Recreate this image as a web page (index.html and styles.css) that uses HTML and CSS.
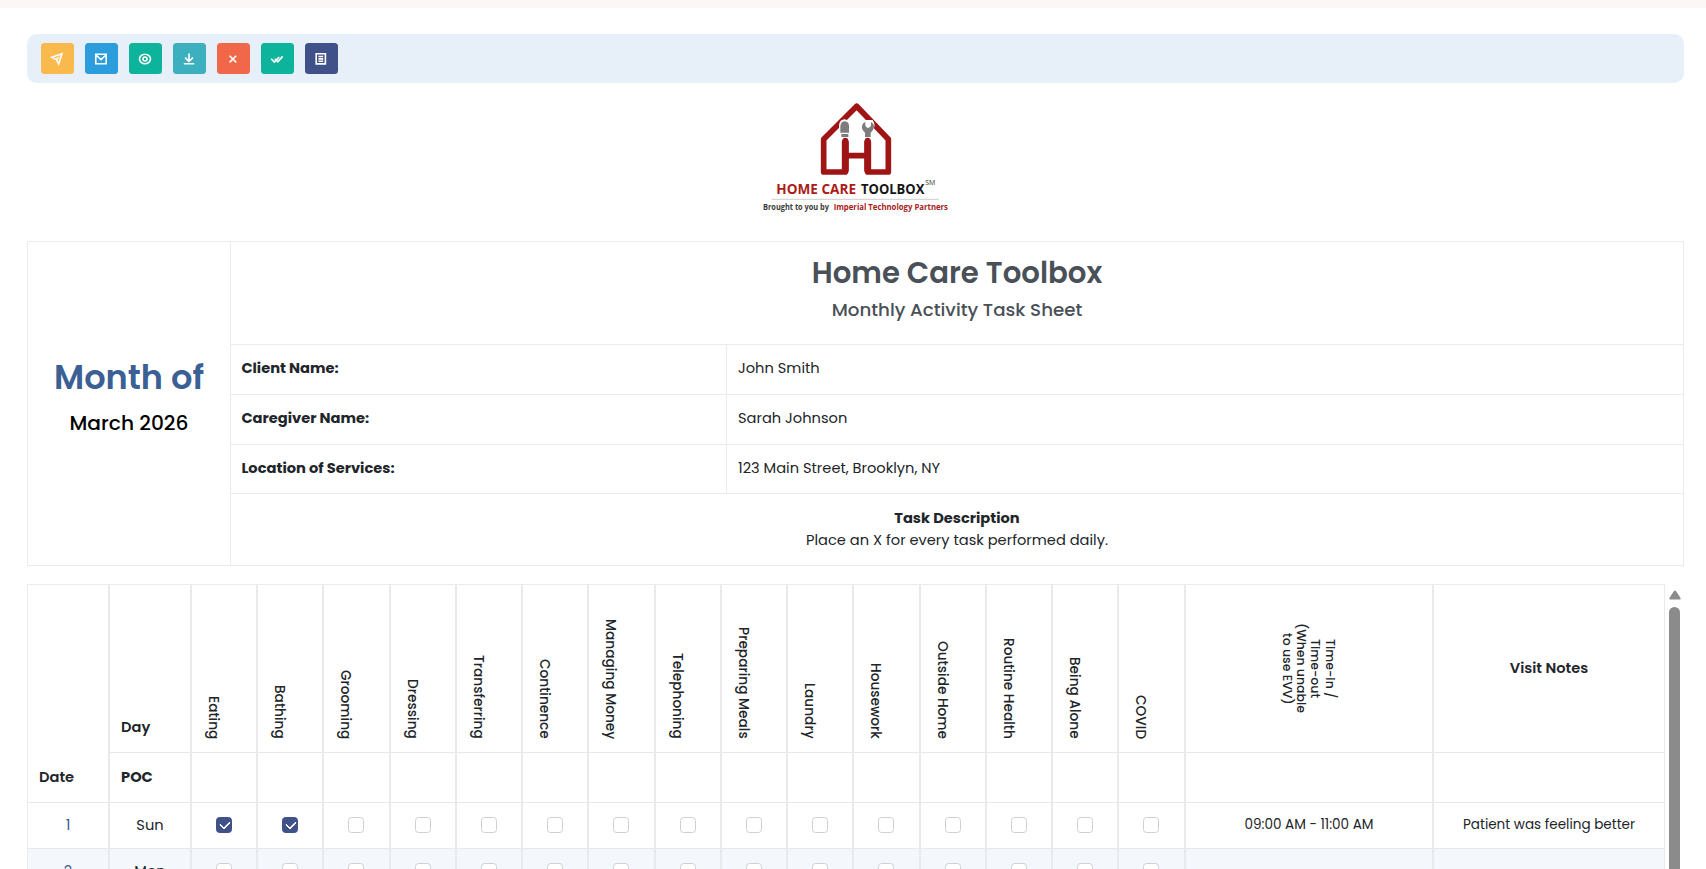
FILE: index.html
```
<!DOCTYPE html>
<html lang="en">
<head>
  <meta charset="UTF-8">
  <meta name="viewport" content="width=device-width, initial-scale=1.0">
  <title>Monthly Activity Task Sheet</title>
  <link rel="stylesheet" href="styles.css">
</head>
<body>
  <div class="top-strip"></div>

  <main class="page">
    <div class="toolbar">
      <button class="btn btn-send" aria-label="Send">
        <svg viewBox="0 0 14 14"><path d="M1.6 5.2 L12 1.8 L8.7 12 L6.4 7.6 Z M6.4 7.6 L9 5"/></svg>
      </button>
      <button class="btn btn-mail" aria-label="Mail">
        <svg viewBox="0 0 14 14"><path d="M1.8 2.3 H12.2 V11.8 H1.8 Z M2 3 L7 7.6 L12 3"/></svg>
      </button>
      <button class="btn btn-green" aria-label="View">
        <svg viewBox="0 0 14 14"><ellipse cx="7" cy="7" rx="5.5" ry="4.8"/><circle cx="7" cy="7" r="2"/></svg>
      </button>
      <button class="btn btn-download" aria-label="Download">
        <svg viewBox="0 0 14 14"><path d="M7 1.4 V9.2 M3 5.6 L7 9.4 L11 5.6 M1.8 11.8 H12.2"/></svg>
      </button>
      <button class="btn btn-close" aria-label="Close">
        <svg viewBox="0 0 14 14"><path d="M3.6 3.8 L10.2 10.4 M10.2 3.8 L3.6 10.4"/></svg>
      </button>
      <button class="btn btn-green" aria-label="Approve">
        <svg viewBox="0 0 14 14"><path d="M1.2 6.8 L4.4 10 L9.2 5 M4.8 6.8 L7.8 9.8 L12.6 4.4"/></svg>
      </button>
      <button class="btn btn-report" aria-label="Report">
        <svg viewBox="0 0 14 14"><path d="M2.2 1.8 H11.4 V11.9 H2.2 Z M4.4 4.5 H9.2 M4.4 6.9 H9.2 M4.4 9.3 H9.2"/></svg>
      </button>
    </div>

    <div class="logo">
      <svg viewBox="0 0 690 420" width="230" height="140">
        <g fill="none" stroke="#9f1414" stroke-width="17" stroke-linejoin="round" stroke-linecap="round">
          <path d="M316 152 V246 H251 V148 L350 49 L445 148 V246 H383 V152"/>
          <path d="M316 157 V240 M383 157 V240" stroke-width="21"/>
          <path d="M316 197 H383"/>
        </g>
        <path d="M297 140 V106 Q299 88 314 88 Q330 90 330 106 V140 Z M365 140 L370 122 Q360 108 368 90 H398 Q410 108 396 122 L400 140 Z" fill="#fff"/>
        <path d="M301 128 V108 Q303 94 314 94 Q327 95 327 108 V128 Z M304 132 H325 V141 H304 Z" fill="#7d7d7d"/>
        <path d="M375 141 V128 Q364 119 366 108 Q367 99 376 96 V108 L384 115 L393 108 V96 Q403 102 402 111 Q400 122 392 128 V141 Z" fill="#7d7d7d"/>
        <g class="logo-name">
          <text x="109" y="312" textLength="239" lengthAdjust="spacingAndGlyphs" fill="#ac1c16">HOME CARE</text>
          <text x="363" y="312" textLength="190" lengthAdjust="spacingAndGlyphs" fill="#161616">TOOLBOX</text>
        </g>
        <text class="logo-mark" x="556" y="286" textLength="30" lengthAdjust="spacingAndGlyphs">SM</text>
        <path d="M95 328 H597" stroke="#b5b5b5" stroke-width="2"/>
        <g class="logo-sub">
          <text x="69" y="359" textLength="198" lengthAdjust="spacingAndGlyphs" fill="#3a3a3a">Brought to you by</text>
          <text x="281" y="359" textLength="343" lengthAdjust="spacingAndGlyphs" fill="#a8211c">Imperial Technology Partners</text>
        </g>
      </svg>
    </div>

    <section class="info">
      <div class="month">
        <h2>Month of</h2>
        <p>March 2026</p>
      </div>
      <div class="details">
        <div class="heading">
          <h1>Home Care Toolbox</h1>
          <h3>Monthly Activity Task Sheet</h3>
        </div>
        <div class="row"><b>Client Name:</b><span>John Smith</span></div>
        <div class="row"><b>Caregiver Name:</b><span>Sarah Johnson</span></div>
        <div class="row row-last"><b>Location of Services:</b><span>123 Main Street, Brooklyn, NY</span></div>
        <div class="description">
          <b>Task Description</b>
          <p>Place an X for every task performed daily.</p>
        </div>
      </div>
    </section>

    <div class="sheet">
      <table class="tasks">
        <colgroup>
          <col class="c83"><col class="c82"><col><col><col class="c67"><col><col><col><col class="c67"><col><col><col><col class="c67"><col><col><col><col class="c67"><col class="c-time"><col class="c-notes">
        </colgroup>
        <thead>
          <tr class="names">
            <th class="low" rowspan="2">Date</th>
            <th class="low">Day</th>
            <th class="task"><span>Eating</span></th>
            <th class="task"><span>Bathing</span></th>
            <th class="task"><span>Grooming</span></th>
            <th class="task"><span>Dressing</span></th>
            <th class="task"><span>Transferring</span></th>
            <th class="task"><span>Continence</span></th>
            <th class="task"><span>Managing Money</span></th>
            <th class="task"><span>Telephoning</span></th>
            <th class="task"><span>Preparing Meals</span></th>
            <th class="task"><span>Laundry</span></th>
            <th class="task"><span>Housework</span></th>
            <th class="task"><span>Outside Home</span></th>
            <th class="task"><span>Routine Health</span></th>
            <th class="task"><span>Being Alone</span></th>
            <th class="task"><span>COVID</span></th>
            <th class="time"><span>Time-in /<br>Time-out<br>(When unable<br>to use EVV)</span></th>
            <th class="notes">Visit Notes</th>
          </tr>
          <tr class="poc">
            <th class="low">POC</th>
            <th></th><th></th><th></th><th></th><th></th><th></th><th></th><th></th><th></th><th></th><th></th><th></th><th></th><th></th><th></th><th></th><th></th>
          </tr>
        </thead>
        <tbody>
          <tr>
            <td class="date">1</td>
            <td>Sun</td>
            <td><input type="checkbox" checked></td>
            <td><input type="checkbox" checked></td>
            <td><input type="checkbox"></td>
            <td><input type="checkbox"></td>
            <td><input type="checkbox"></td>
            <td><input type="checkbox"></td>
            <td><input type="checkbox"></td>
            <td><input type="checkbox"></td>
            <td><input type="checkbox"></td>
            <td><input type="checkbox"></td>
            <td><input type="checkbox"></td>
            <td><input type="checkbox"></td>
            <td><input type="checkbox"></td>
            <td><input type="checkbox"></td>
            <td><input type="checkbox"></td>
            <td class="small">09:00 AM - 11:00 AM</td>
            <td class="small">Patient was feeling better</td>
          </tr>
          <tr>
            <td class="date">2</td>
            <td>Mon</td>
            <td><input type="checkbox"></td>
            <td><input type="checkbox"></td>
            <td><input type="checkbox"></td>
            <td><input type="checkbox"></td>
            <td><input type="checkbox"></td>
            <td><input type="checkbox"></td>
            <td><input type="checkbox"></td>
            <td><input type="checkbox"></td>
            <td><input type="checkbox"></td>
            <td><input type="checkbox"></td>
            <td><input type="checkbox"></td>
            <td><input type="checkbox"></td>
            <td><input type="checkbox"></td>
            <td><input type="checkbox"></td>
            <td><input type="checkbox"></td>
            <td></td>
            <td></td>
          </tr>
        </tbody>
      </table>
      <div class="scrollbar">
        <svg viewBox="0 0 12 10" width="12" height="10"><path d="M6 0.5 Q6.6 0.5 7 1 L11.6 8 Q12 9.5 10.8 9.5 H1.2 Q0 9.5 0.4 8 L5 1 Q5.4 0.5 6 0.5 Z" fill="#8b8b8b"/></svg>
        <div class="thumb"></div>
      </div>
    </div>
  </main>
</body>
</html>
```
FILE: styles.css
```
* {
  box-sizing: border-box;
}
body {
  margin: 0;
  height: 869px;
  overflow: hidden;
  background-color: #fff;
  color: #212529;
  font-family: Poppins, Inter, sans-serif;
  font-size: 14.63px;
  line-height: 22px;
}
h1, h2, h3, p {
  margin: 0;
}
.top-strip {
  height: 8px;
  background-color: #fcf6f6;
}
.page {
  width: 1657px;
  margin: 26px 0 0 27px;
}

/* toolbar */
.toolbar {
  display: flex;
  gap: 11.5px;
  height: 49px;
  padding: 9px 14px;
  background-color: #e7eff9;
  border-radius: 10px;
}
.btn {
  display: flex;
  align-items: center;
  justify-content: center;
  width: 32.5px;
  height: 31px;
  padding: 0;
  border: none;
  border-radius: 3.5px;
}
.btn svg {
  width: 14px;
  height: 14px;
  fill: none;
  stroke: #fff;
  stroke-width: 1.6;
}
.btn-send { background-color: #f9b94d; }
.btn-mail { background-color: #2b9cdc; }
.btn-green { background-color: #0db39b; }
.btn-download { background-color: #3cb0bf; }
.btn-close { background-color: #f1674a; }
.btn-report { background-color: #405189; }

/* logo */
.logo {
  display: flex;
  justify-content: center;
  height: 158px;
  padding: 7px 2px 0 0;
}
.logo text {
  font-family: "Open Sans", sans-serif;
}
.logo-name {
  font-size: 42px;
  font-weight: 700;
}
.logo .logo-mark {
  font-size: 19px;
  fill: #333;
}
.logo-sub {
  font-size: 24px;
  font-weight: 700;
}

/* client details */
.info {
  display: flex;
  height: 325px;
  border: 1px solid #e9ebec;
}
.month {
  display: flex;
  flex-direction: column;
  justify-content: center;
  gap: 7px;
  width: 203px;
  padding-bottom: 7px;
  border-right: 1px solid #e9ebec;
  text-align: center;
  line-height: 38px;
}
.month h2 {
  color: #3a6094;
  font-size: 33.6px;
  font-weight: 600;
}
.month p {
  color: #000;
  font-size: 20.2px;
  font-weight: 500;
}
.details {
  flex: 1;
}
.heading {
  height: 103px;
  padding-top: 14px;
  border-bottom: 1px solid #e9ebec;
  color: #495057;
  text-align: center;
}
.heading h1 {
  font-size: 29.2px;
  font-weight: 600;
  line-height: 34px;
}
.heading h3 {
  margin-top: 9px;
  font-size: 18.25px;
  font-weight: 500;
}
.row {
  display: grid;
  grid-template-columns: 496px 1fr;
  height: 50px;
  border-bottom: 1px solid #e9ebec;
}
.row-last {
  height: 49px;
}
.row b,
.row span {
  padding: 12px 11px;
}
.row b {
  padding-left: 10.4px;
  border-right: 1px solid #e9ebec;
}
.description {
  padding-top: 13px;
  text-align: center;
}

/* task sheet */
.sheet {
  display: flex;
  height: 285px;
  margin-top: 18px;
  overflow: hidden;
}
.tasks {
  flex: none;
  width: 1638px;
  height: 311px;
  table-layout: fixed;
  border-collapse: separate;
  border-spacing: 0;
  border-top: 1px solid #e9ebec;
  text-align: center;
}
.tasks col { width: 66px; }
.tasks .c83 { width: 83px; }
.tasks .c82 { width: 82px; }
.tasks .c67 { width: 67px; }
.tasks .c-time { width: 248px; }
.tasks .c-notes { width: 231px; }
.tasks th,
.tasks td {
  height: 46px;
  padding: 0 0 2px;
  border-right: 2px solid #e9eaec;
  border-bottom: 1px solid #e6e8ea;
}
.tasks tr > :last-child {
  border-right-width: 1px;
}
.tasks th:first-child[rowspan],
.tasks td:first-child {
  border-left: 1px solid #e9ebec;
}
.tasks .names th {
  height: 168px;
}
.tasks .poc th {
  height: 50px;
}
.tasks th {
  font-weight: 600;
}
.tasks .low {
  padding: 0 11px 14px;
  vertical-align: bottom;
  text-align: left;
}
.tasks .poc .low {
  font-weight: 700;
}
.tasks .task {
  padding: 0 0 13px 11px;
  vertical-align: bottom;
  text-align: left;
}
.task span,
.time span {
  display: inline-block;
  writing-mode: vertical-rl;
  font-weight: 500;
  white-space: nowrap;
}
.task span {
  font-size: 13.7px;
  line-height: 21px;
  vertical-align: bottom;
}
.tasks .names .time {
  padding: 0 2px 0 0;
}
.time span {
  font-size: 12.5px;
  line-height: 14.4px;
  text-align: center;
  vertical-align: middle;
}
.tasks tbody tr:nth-child(even) {
  background-color: #f4f7fc;
}
.tasks .date {
  color: #3a5a92;
}
.tasks .small {
  font-size: 13.55px;
}
.tasks input {
  appearance: none;
  display: block;
  width: 16px;
  height: 16px;
  margin: 0 24px;
  border: 1px solid #cdd0d4;
  border-radius: 3.5px;
  background-color: #fff;
}
.tasks input:checked {
  border-color: #405189;
  background-color: #405189;
}
.tasks input:checked::after {
  content: "";
  display: block;
  width: 8px;
  height: 5px;
  margin: 3.5px 3px;
  border-left: 2px solid #fff;
  border-bottom: 2px solid #fff;
  border-radius: 1px;
  transform: translateY(-0.6px) rotate(-45deg);
}

.scrollbar {
  display: flex;
  flex-direction: column;
  align-items: center;
  gap: 7px;
  width: 19px;
  padding-top: 6px;
}
.thumb {
  width: 11px;
  flex: 1;
  border-radius: 6px 6px 0 0;
  background-color: #8b8b8b;
}
```
